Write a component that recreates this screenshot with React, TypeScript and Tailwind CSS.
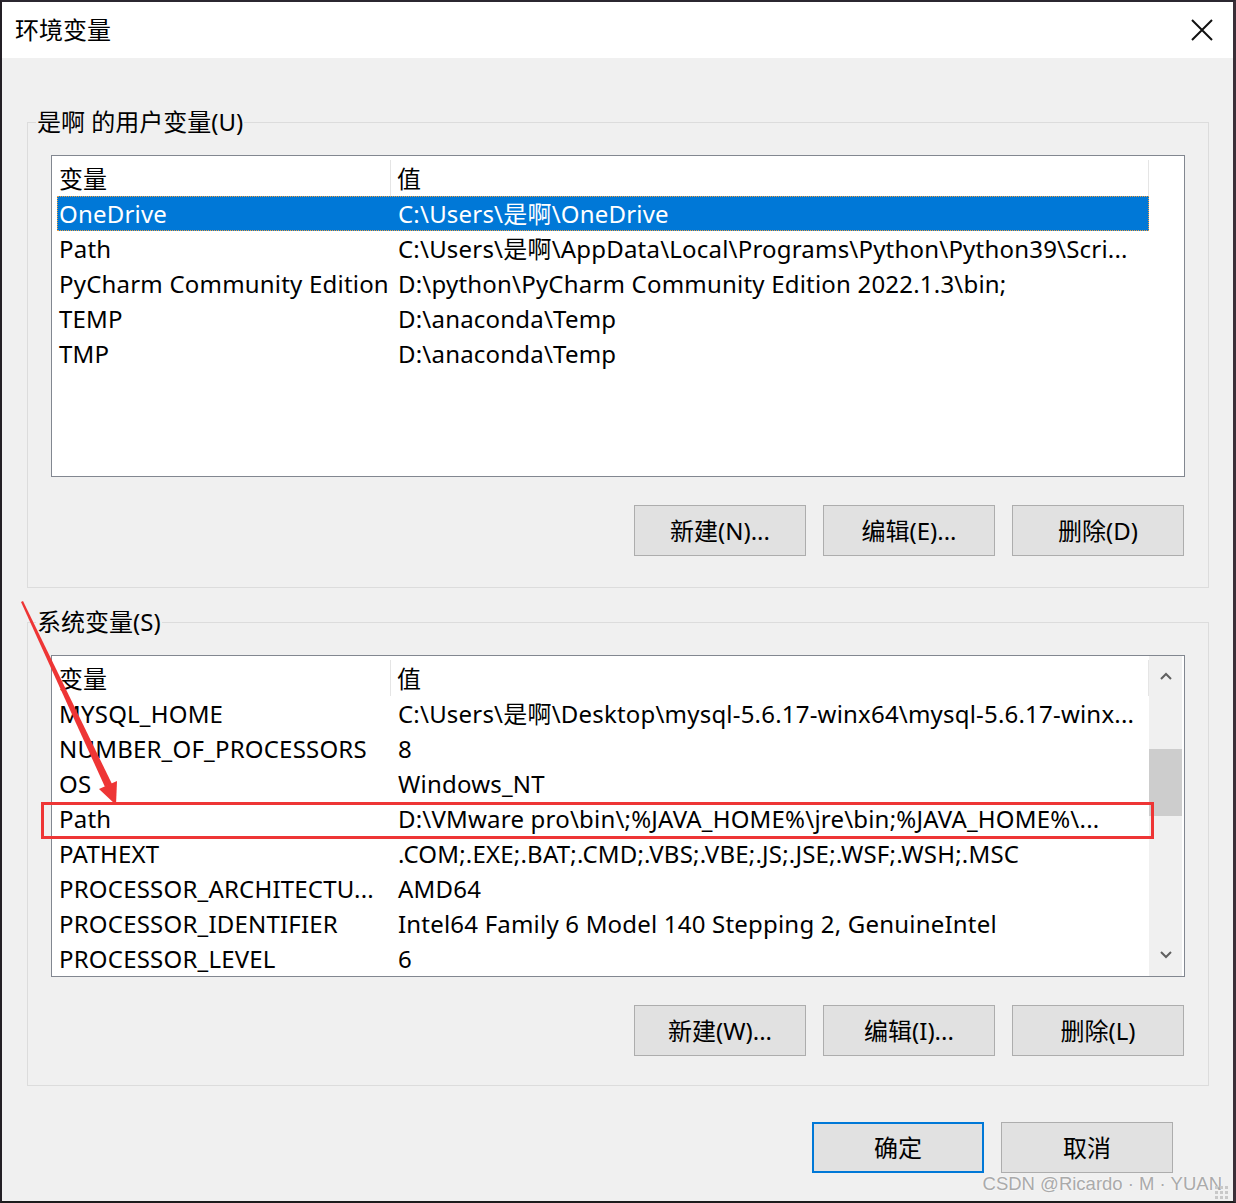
import React from 'react';

const FONT = '"Noto Sans", "Noto Sans CJK SC", sans-serif';

type Row = { name: string; value: string; selected?: boolean };

const userVars: Row[] = [
  { name: 'OneDrive', value: 'C:\\Users\\是啊\\OneDrive', selected: true },
  { name: 'Path', value: 'C:\\Users\\是啊\\AppData\\Local\\Programs\\Python\\Python39\\Scri...' },
  { name: 'PyCharm Community Edition', value: 'D:\\python\\PyCharm Community Edition 2022.1.3\\bin;' },
  { name: 'TEMP', value: 'D:\\anaconda\\Temp' },
  { name: 'TMP', value: 'D:\\anaconda\\Temp' },
];

const sysVars: Row[] = [
  { name: 'MYSQL_HOME', value: 'C:\\Users\\是啊\\Desktop\\mysql-5.6.17-winx64\\mysql-5.6.17-winx...' },
  { name: 'NUMBER_OF_PROCESSORS', value: '8' },
  { name: 'OS', value: 'Windows_NT' },
  { name: 'Path', value: 'D:\\VMware pro\\bin\\;%JAVA_HOME%\\jre\\bin;%JAVA_HOME%\\...' },
  { name: 'PATHEXT', value: '.COM;.EXE;.BAT;.CMD;.VBS;.VBE;.JS;.JSE;.WSF;.WSH;.MSC' },
  { name: 'PROCESSOR_ARCHITECTU...', value: 'AMD64' },
  { name: 'PROCESSOR_IDENTIFIER', value: 'Intel64 Family 6 Model 140 Stepping 2, GenuineIntel' },
  { name: 'PROCESSOR_LEVEL', value: '6' },
];

const Btn = ({ label, primary }: { label: string; primary?: boolean }) => (
  <button
    className={`flex h-[51px] w-[172px] items-center justify-center bg-[#e1e1e1] text-[24px] text-black ${
      primary ? 'border-2 border-[#0078d7]' : 'border border-[#adadad]'
    }`}
  >
    {label}
  </button>
);

const ListView = ({ rows, scroll }: { rows: Row[]; scroll?: boolean }) => (
  <div className="flex h-[322px] overflow-hidden border border-[#828790] bg-white">
    <div className="flex w-[1097px] flex-col pl-[5px] pt-[4px]">
      {/* header */}
      <div className="flex h-[36px] shrink-0 items-center">
        <div className="flex h-full w-[334px] items-center border-r border-[#e5e5e5] pl-[2px] pt-[1px]">变量</div>
        <div className="flex h-full flex-1 items-center border-r border-[#e5e5e5] pl-[6px] pt-[1px]">值</div>
      </div>
      {rows.map((r, i) => (
        <div
          key={i}
          className={`flex h-[35px] shrink-0 items-center whitespace-nowrap tracking-[0.2px] ${
            r.selected ? 'bg-[#0078d7] text-white outline-1 -outline-offset-1 outline-dotted outline-[#f0a040]' : 'text-black'
          }`}
        >
          <div className="w-[335px] overflow-hidden pl-[2px]">{r.name}</div>
          <div className="flex-1 overflow-hidden pl-[6px]">{r.value}</div>
        </div>
      ))}
    </div>
    {scroll ? (
      <div className="flex w-[33px] flex-col bg-[#f0f0f0]">
        <div className="flex h-[38px] items-center justify-center pt-[2px]">
          <svg width="14" height="10" viewBox="0 0 14 10">
            <path d="M2 8 L7 3 L12 8" fill="none" stroke="#606060" strokeWidth="2" />
          </svg>
        </div>
        <div className="h-[55px]" />
        <div className="h-[67px] bg-[#cdcdcd]" />
        <div className="flex-1" />
        <div className="flex h-[38px] items-center justify-center pb-[4px]">
          <svg width="14" height="10" viewBox="0 0 14 10">
            <path d="M2 2 L7 7 L12 2" fill="none" stroke="#606060" strokeWidth="2" />
          </svg>
        </div>
      </div>
    ) : null}
  </div>
);

const Group = ({ title, rows, buttons, scroll, pb }: { title: string; rows: Row[]; buttons: string[]; scroll?: boolean; pb: string }) => (
  <fieldset className={`border border-[#dcdcdc] ${pb}`}>
    <legend className="ml-[8px] px-[1px] text-[24px] leading-[30px] text-black">{title}</legend>
    <div className="px-[23px]">
      <div className="mt-[18px]">
        <ListView rows={rows} scroll={scroll} />
      </div>
      <div className="mt-[28px] flex justify-end gap-[17px] pr-[1px]">
        {buttons.map((b) => (
          <Btn key={b} label={b} />
        ))}
      </div>
    </div>
  </fieldset>
);

export default function App() {
  return (
    <div
      className="relative h-[1203px] w-[1236px] border-b-2 border-l-2 border-r-[3px] border-t-2 border-b-[#1c1c1c] border-l-[#231f25] border-r-[#3a2f38] border-t-[#2b2730] bg-[#f0f0f0] text-[24px] text-black"
      style={{ fontFamily: FONT }}
    >
      {/* Title bar */}
      <div className="flex h-[56px] items-center justify-between bg-white pl-[13px] pr-[20px]">
        <span className="text-[24px]">环境变量</span>
        <svg width="22" height="22" viewBox="0 0 22 22">
          <path d="M1 1 L21 21 M21 1 L1 21" stroke="#111" strokeWidth="2" />
        </svg>
      </div>

      <div className="flex flex-col pl-[25px] pr-[24px] pt-[49px]">
        <Group
          title="是啊 的用户变量(U)"
          rows={userVars}
          buttons={['新建(N)...', '编辑(E)...', '删除(D)']}
          pb="pb-[31px]"
        />
        <div className="mt-[19px]">
          <Group
            title="系统变量(S)"
            rows={sysVars}
            buttons={['新建(W)...', '编辑(I)...', '删除(L)']}
            scroll
            pb="pb-[29px]"
          />
        </div>
        <div className="mt-[36px] flex justify-end gap-[17px] pr-[36px]">
          <Btn label="确定" primary />
          <Btn label="取消" />
        </div>
      </div>

      {/* Annotation: red highlight box */}
      <div className="pointer-events-none absolute left-[39px] top-[800px] h-[37px] w-[1113px] border-[3px] border-[#ee3535]" />

      {/* Annotation: red arrow */}
      <svg className="pointer-events-none absolute left-[-2px] top-[-2px]" width="1236" height="1203">
        <polygon points="21,602 23,601 112,784 105,787" fill="#ee3535" />
        <polygon points="99,789 117,781 116,805" fill="#ee3535" />
      </svg>

      {/* Watermark */}
      <div className="pointer-events-none absolute bottom-[3px] right-[11px] text-[18.5px] text-[#aaaaaa] [text-shadow:0_0_2px_#fff]" style={{ fontFamily: '"Liberation Sans", sans-serif' }}>
        CSDN @Ricardo · M · YUAN
      </div>
      <div className="pointer-events-none absolute bottom-[2px] right-[5px] grid grid-cols-3 gap-[2px]">
        {Array.from({ length: 9 }).map((_, i) => (
          <div key={i} className="h-[3px] w-[3px] bg-[#c8c8c8]" />
        ))}
      </div>
    </div>
  );
}
